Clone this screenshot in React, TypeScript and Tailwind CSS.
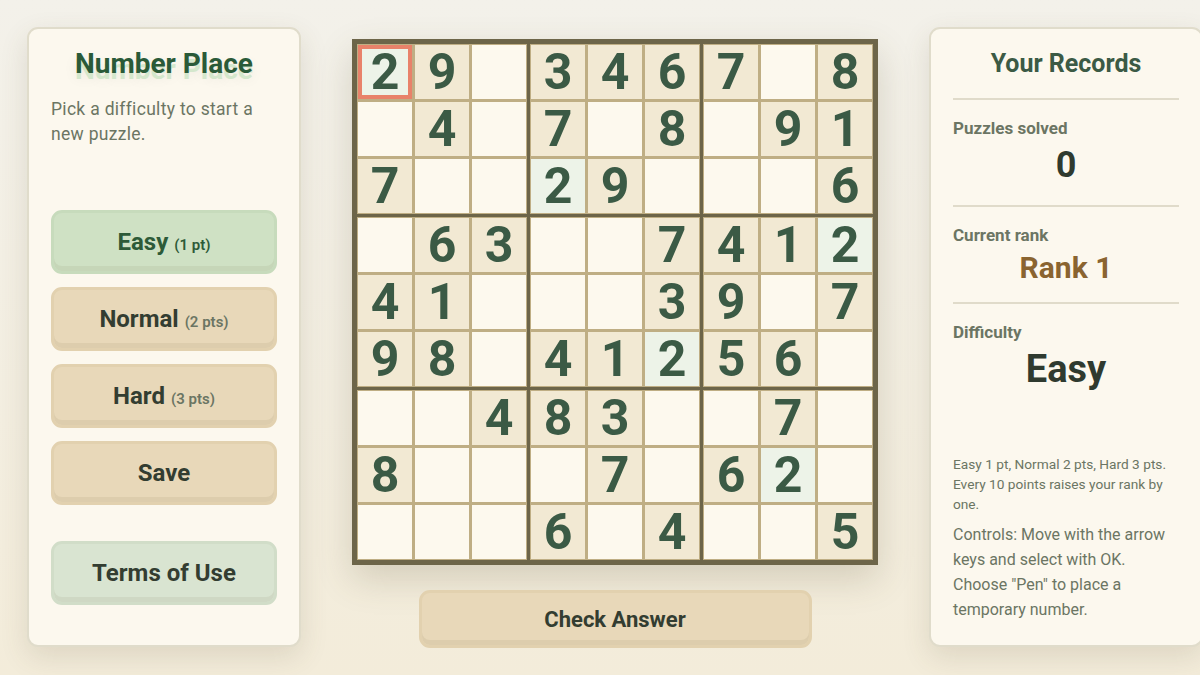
import { ReactNode } from "react";

const PUZZLE = [
  "29.3467.8",
  ".4.7.8.91",
  "7..29...6",
  ".63..7412",
  "41...39.7",
  "98.41256.",
  "..483..7.",
  "8...7.62.",
  "...6.4..5",
];

const SELECTED = { row: 0, col: 0 };

type Tone = "green" | "tan" | "sage";

const toneClasses: Record<Tone, string> = {
  green: "bg-[#cfe1c4] border-[#c7dbbc] text-[#2d5a38]",
  tan: "bg-[#e8d8b9] border-[#e2d1af] text-[#333d31]",
  sage: "bg-[#d9e4d1] border-[#d1ddc8] text-[#333d31]",
};

const PanelButton = ({
  tone,
  children,
  className = "",
}: {
  tone: Tone;
  children: ReactNode;
  className?: string;
}) => {
  return (
    <button
      className={`flex items-center justify-center rounded-[11px] border-[3px] shadow-[inset_0_-5px_0_rgba(90,70,30,0.07)] font-bold ${toneClasses[tone]} ${className}`}
    >
      {children}
    </button>
  );
};

const Cell = ({ row, col }: { row: number; col: number }) => {
  const value = PUZZLE[row][col];
  const selectedValue = PUZZLE[SELECTED.row][SELECTED.col];
  const isSelected = row === SELECTED.row && col === SELECTED.col;
  const isSame = value !== "." && value === selectedValue;

  let bg = "bg-[#fdf9ee]";
  if (value !== ".") bg = "bg-[#f2e9d3]";
  if (isSame) bg = "bg-[#edf3e8]";

  return (
    <div
      className={`flex h-[54px] w-[54px] items-center justify-center text-[50px] font-bold leading-none text-[#3b5a45] ${bg} ${
        isSelected ? "border-4 border-[#e8826a]" : ""
      }`}
    >
      {value !== "." ? value : ""}
    </div>
  );
};

const Board = () => {
  const boxes = [0, 1, 2, 3, 4, 5, 6, 7, 8];
  return (
    <div className="grid grid-cols-3 gap-[3px] bg-[#6d6549] p-[5px] shadow-[0_14px_34px_rgba(90,80,50,0.2)]">
      {boxes.map((b) => {
        const br = Math.floor(b / 3) * 3;
        const bc = (b % 3) * 3;
        return (
          <div key={b} className="grid grid-cols-3 gap-[3px] bg-[#bfae84] p-px">
            {[0, 1, 2, 3, 4, 5, 6, 7, 8].map((i) => (
              <Cell key={i} row={br + Math.floor(i / 3)} col={bc + (i % 3)} />
            ))}
          </div>
        );
      })}
    </div>
  );
};

const Divider = ({ className = "" }: { className?: string }) => (
  <div className={`h-[2px] bg-[#e0dbca] ${className}`} />
);

export default function App() {
  return (
    <div className="h-[675px] w-[1200px] overflow-hidden bg-gradient-to-b from-[#f3f1ea] to-[#f3ecda] font-['Roboto',sans-serif]">
      <div className="flex gap-[51px] pl-[27px] pt-[27px]">
        {/* left panel */}
        <div className="flex h-[620px] w-[274px] shrink-0 flex-col rounded-[11px] border-2 border-[#e0dccb] bg-[#fcf8ee] px-[22px] pt-[18px] shadow-[0_10px_28px_rgba(90,80,50,0.14)]">
          <h1 className="text-center text-[28px] font-bold leading-[34px] text-[#2a5a38] [text-shadow:0_6px_0_#d4e7cc,0_6px_14px_rgba(0,0,0,0.08)]">
            Number Place
          </h1>
          <p className="mt-[16px] text-[17.5px] leading-[25px] tracking-[0.3px] text-[#6b7563]">
            Pick a difficulty to start a new puzzle.
          </p>
          <div className="mt-[63px] flex flex-col gap-[13px]">
            <PanelButton tone="green" className="h-[64px]">
              <span className="text-[24px]">Easy</span>
              <span className="ml-[6px] mt-[6px] text-[15px] font-semibold">(1 pt)</span>
            </PanelButton>
            <PanelButton tone="tan" className="h-[64px]">
              <span className="text-[24px]">Normal</span>
              <span className="ml-[6px] mt-[6px] text-[15px] font-semibold text-[#6b7563]">
                (2 pts)
              </span>
            </PanelButton>
            <PanelButton tone="tan" className="h-[64px]">
              <span className="text-[24px]">Hard</span>
              <span className="ml-[6px] mt-[6px] text-[15px] font-semibold text-[#6b7563]">
                (3 pts)
              </span>
            </PanelButton>
            <PanelButton tone="tan" className="h-[64px] text-[24px]">
              Save
            </PanelButton>
          </div>
          <PanelButton tone="sage" className="mt-[36px] h-[64px] text-[24px]">
            Terms of Use
          </PanelButton>
        </div>

        {/* board */}
        <div className="flex w-[526px] shrink-0 flex-col items-center pt-[12px]">
          <Board />
          <PanelButton tone="tan" className="mt-[25px] h-[58px] w-[393px] text-[22px]">
            Check Answer
          </PanelButton>
        </div>

        {/* right panel */}
        <div className="flex h-[620px] w-[274px] shrink-0 flex-col rounded-[11px] border-2 border-[#e0dccb] bg-[#fcf8ee] px-[22px] pb-[23px] pt-[18px] shadow-[0_10px_28px_rgba(90,80,50,0.14)]">
          <h2 className="text-center text-[25px] font-bold leading-[34px] text-[#3b5a45]">
            Your Records
          </h2>
          <Divider className="mt-[17px]" />
          <div className="pt-[17px]">
            <div className="text-[17px] font-bold leading-[22px] text-[#6b7563]">
              Puzzles solved
            </div>
            <div className="mt-[4px] text-center text-[36px] font-bold leading-[44px] text-[#2f3a2f]">
              0
            </div>
          </div>
          <Divider className="mt-[18px]" />
          <div className="pt-[17px]">
            <div className="text-[17px] font-bold leading-[22px] text-[#6b7563]">
              Current rank
            </div>
            <div className="text-center text-[30px] font-bold leading-[44px] text-[#8a6430]">
              Rank 1
            </div>
          </div>
          <Divider className="mt-[12px]" />
          <div className="pt-[17px]">
            <div className="text-[17px] font-bold leading-[22px] text-[#6b7563]">
              Difficulty
            </div>
            <div className="mt-[2px] text-center text-[38px] font-bold leading-[48px] text-[#2f3a2f]">
              Easy
            </div>
          </div>
          <div className="mt-auto">
            <p className="text-[13.7px] leading-[20px] text-[#6b7563]">
              Easy 1 pt, Normal 2 pts, Hard 3 pts. Every 10 points raises your rank by one.
            </p>
            <p className="mt-[8px] text-[16px] leading-[25px] text-[#6b7563]">
              Controls: Move with the arrow keys and select with OK. Choose "Pen" to place a
              temporary number.
            </p>
          </div>
        </div>
      </div>
    </div>
  );
}
